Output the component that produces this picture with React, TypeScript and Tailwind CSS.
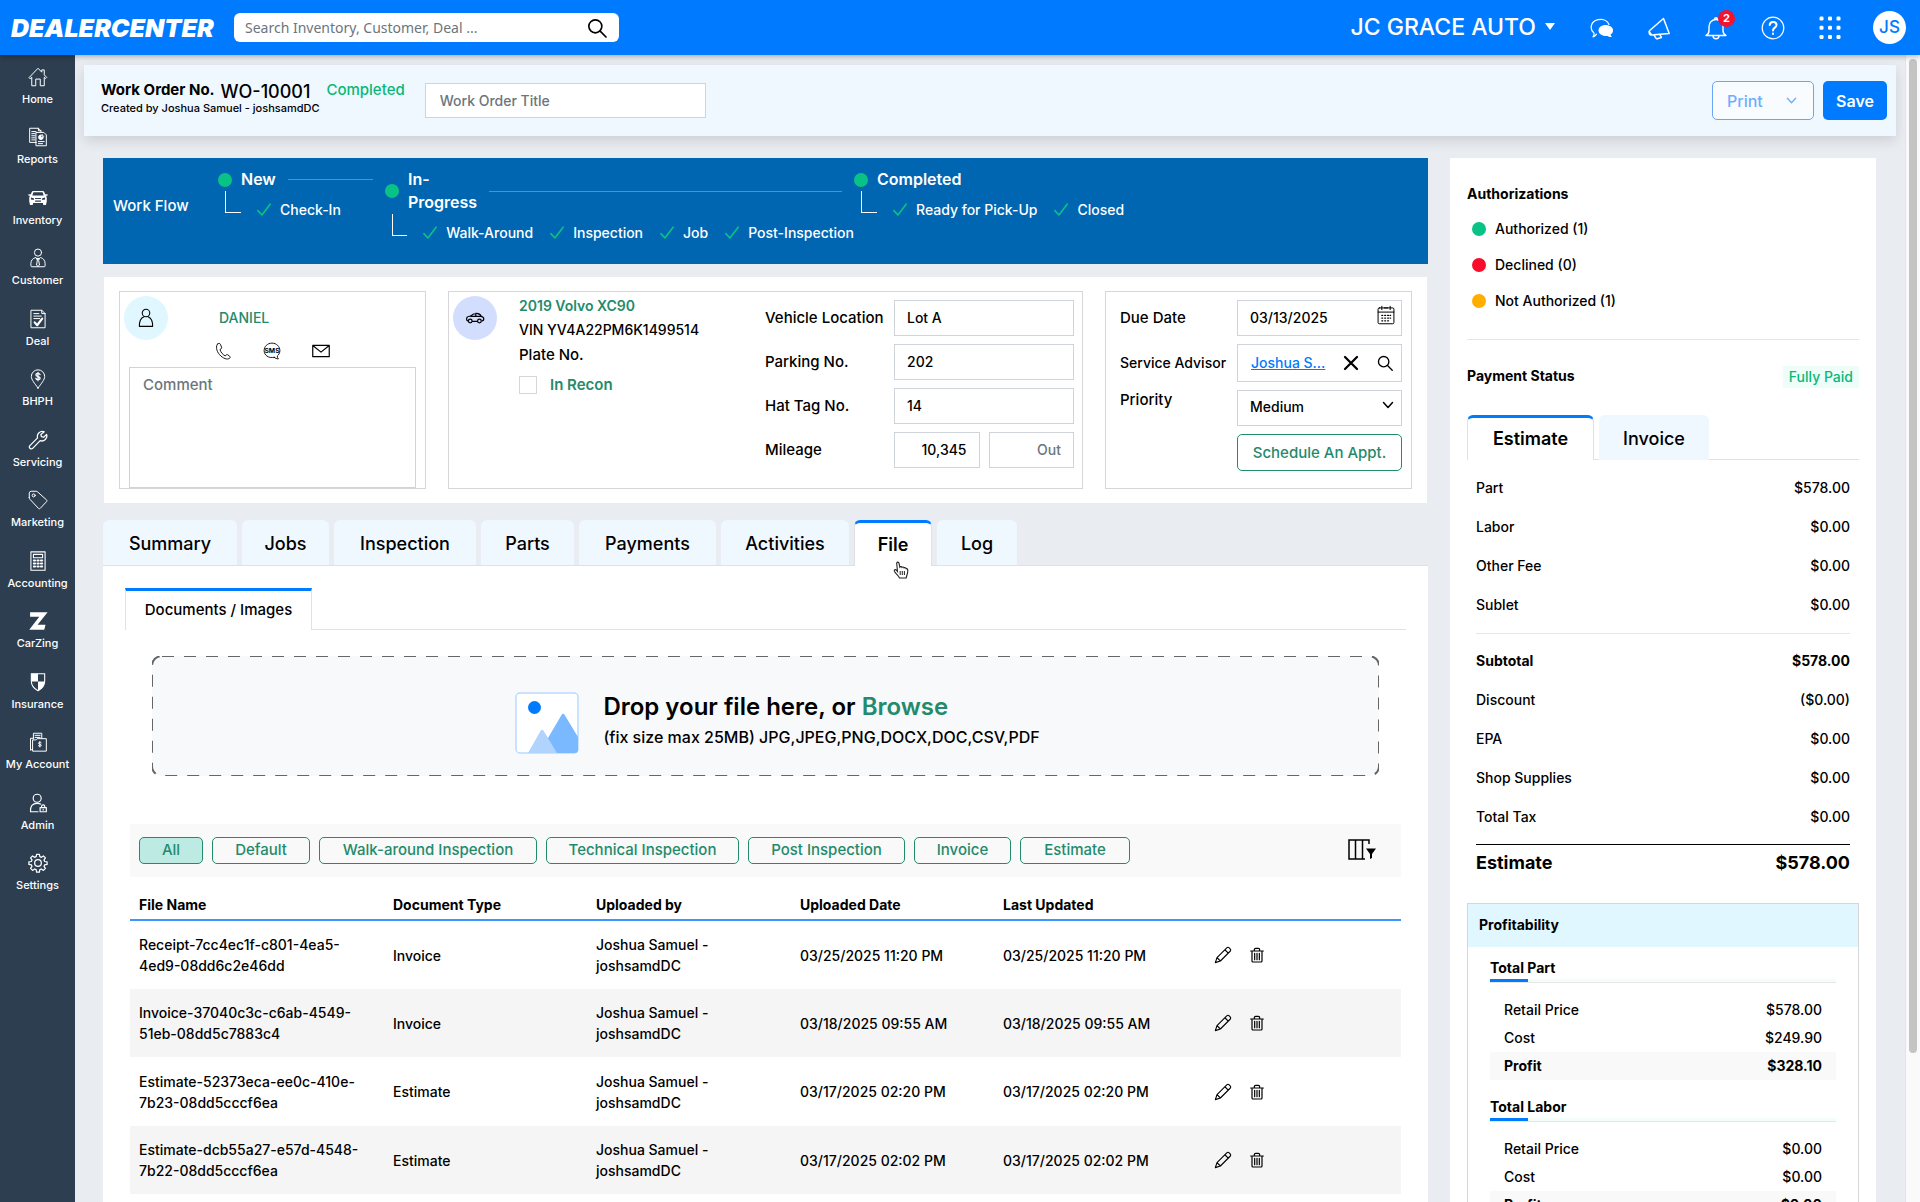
import React from 'react';

type IconProps = { className?: string };

const Svg: React.FC<{ className?: string; width?: number; children: React.ReactNode }> = ({
  className = 'size-5',
  width = 1.2,
  children,
}) => (
  <svg
    viewBox="0 0 24 24"
    fill="none"
    stroke="currentColor"
    strokeWidth={width}
    strokeLinecap="round"
    strokeLinejoin="round"
    className={className}
    aria-hidden="true"
  >
    {children}
  </svg>
);

const HomeIcon = () => (
  <Svg>
    <path d="M1.5 12.5 12 1.5l4.5 4.7V3.5h3v6l3 3-1.3 1.3-1.7-1.6V22.500h-4.800v-8h-5.400v8H4.500V12.200l-1.700 1.600z" />
  </Svg>
);

const ReportsIcon = () => (
  <Svg>
    <path d="M10 18.500H2V1.500h10.500L15.500 4.500V6M12.500 1.500v3h3M4.500 5.500h5M4.500 8h4M4.500 10.500h4M4.500 13h4M4.500 15.500h4" />
    <path d="M10 6.500h9l3 3v13H10zM12.500 17.500h7M12.500 20h5" />
    <path d="M15.500 9.500a2.800 2.800 0 1 0 2.800 2.800h-2.800z" fill="currentColor" />
    <path d="M17 9v2h2" />
  </Svg>
);

const InventoryIcon = () => (
  <svg viewBox="0 0 24 24" fill="currentColor" className="size-5" aria-hidden="true">
    <path
      fillRule="evenodd"
      d="M6.300 3.500h11.400c.9 0 1.500.4 1.800 1.200l1.100 2.800H23.500v1.800h-2.200c.9.8 1.200 1.700 1.200 2.900v4.600c0 .5-.2.8-.6 1v1.400c0 .8-.4 1.300-1.200 1.300h-1.400c-.8 0-1.300-.5-1.300-1.300V18H6v1.200c0 .8-.5 1.300-1.300 1.300H3.300c-.8 0-1.200-.5-1.200-1.300v-1.400c-.4-.2-.6-.5-.6-1v-4.600c0-1.200.3-2.100 1.200-2.900H.5V7.500h2.900l1.100-2.800c.3-.8.900-1.200 1.800-1.200zM6.500 5.200 5.200 9h13.600l-1.300-3.800zM3.500 11.500v2.300l3.500.5v-2zM20.500 11.500 17 12.300v2l3.500-.5zM8.500 12v1.300h7V12zM8.500 15v1.500h7V15z"
    />
  </svg>
);

const CustomerIcon = () => (
  <Svg>
    <circle cx="12" cy="5.500" r="4.300" />
    <path d="M9 11.500c-3.500.8-5.500 3.500-5.500 7v3c0 .6.4 1 1 1h15c.6 0 1-.4 1-1v-3c0-3.500-2-6.200-5.500-7L12 14zM10.500 12.500h3L12.800 15l1 5.500L12 22l-1.800-1.500 1-5.500z" />
  </Svg>
);

const DealIcon = () => (
  <Svg>
    <path d="M4 1.500h12.500l4 4v17H4zM16.500 1.500v4h4M7 5.500h6M7 8.500h9M7 11.500h7" />
    <path d="m8 16 3 3.500 6-8" strokeWidth="2.600" />
  </Svg>
);

const BhphIcon = () => (
  <Svg>
    <path d="M12 23C8 17 4 13 4 9a8 8 0 0 1 16 0c0 4-4 8-8 14z" />
    <path d="M14.500 6.800c-.4-1-1.300-1.500-2.500-1.500-1.500 0-2.500.8-2.500 1.900 0 2.600 5 1.200 5 3.700 0 1.200-1 1.900-2.500 1.900-1.300 0-2.300-.6-2.600-1.700M12 4v10" strokeWidth="1.500" />
  </Svg>
);

const WrenchIcon = () => (
  <Svg width={1.5}>
    <path d="M19.500 2.200a6 6 0 0 0-8 7.300L2 19a2.400 2.400 0 0 0 3.300 3.300l9.300-9.500a6 6 0 0 0 7.700-7.500l-3.500 3.400-2.700-.7-.7-2.700z" />
  </Svg>
);

const TagIcon = () => (
  <Svg>
    <path d="M1.500 9V3.500a2.500 2.500 0 0 1 2.500-2L9.500 1.500c.8 0 1.500.3 2 .8l10.700 9.500c.7.7.7 1.500 0 2.200l-7.500 8c-.7.7-1.500.7-2.200 0L2.200 11c-.5-.5-.7-1.200-.7-2z" />
    <circle cx="6.800" cy="6.500" r="1.800" />
  </Svg>
);

const CalculatorIcon = () => (
  <Svg width={1.3}>
    <path d="M3.500 1h17v22h-17zM6.500 4h11v4h-11z" />
    <path d="M7 11.500h1.500M11.300 11.500h1.500M15.500 11.500H17M7 15h1.500M11.300 15h1.500M15.500 15H17M7 18.500h1.500M11.300 18.500h1.500M15.500 18.500H17" strokeWidth="2.400" />
  </Svg>
);

const CarZingIcon = () => (
  <svg viewBox="0 0 24 24" fill="currentColor" className="size-5" aria-hidden="true">
    <path d="M2.500 1.500h21L11.500 16.500h9.500L19.500 22.500H1.500L13.500 7H2.500z" />
  </svg>
);

const ShieldIcon = () => (
  <svg viewBox="0 0 24 24" className="size-5" aria-hidden="true">
    <path d="M4 2h16v9c0 5-3.500 9-8 11.500C7.500 20 4 16 4 11z" fill="none" stroke="currentColor" strokeWidth="1.300" />
    <path d="M4 2h8v9.500H4zM12 11.500h8c-.3 5-3.500 8.500-8 11z" fill="currentColor" />
  </svg>
);

const AccountIcon = () => (
  <Svg>
    <path d="M6.500 8.500v-7h10v6M8.500 4h6M8.500 6.500h6M5.500 22.500v-13h4l1.500-1.500h11V22.500zM5.500 20.500 3 22V7.500h3.500" />
    <path d="M15.800 12.800c-1-.9-3.200-.6-3.200.7 0 1.500 3.300.8 3.300 2.400 0 1.400-2.400 1.600-3.400.6M14.200 11.500v6.500" />
  </Svg>
);

const AdminIcon = () => (
  <Svg width={1.4}>
    <circle cx="11" cy="6.300" r="4.800" />
    <path d="M12 22.500H3c-.6-7 2.500-10 8-10 1.800 0 3 .2 4.200.8M14.500 17.500h7.500v5h-7.500zM16.300 17.500v-1.500c0-2.300 3.800-2.300 3.800 0v1.500M18.200 19.500v1" />
  </Svg>
);

const GearIcon = () => (
  <Svg width={1.5}>
    <circle cx="12" cy="12" r="4" />
    <path d="M10.300 1.500h3.400l.5 2.900 1.900.8 2.400-1.700 2.400 2.400-1.700 2.400.8 1.900 2.900.5v3l-2.900.5-.8 1.900 1.700 2.400-2.400 2.400-2.400-1.700-1.900.8-.5 2.900h-3.400l-.5-2.900-1.900-.8-2.400 1.700-2.400-2.400 1.700-2.400-.8-1.900-2.900-.5v-3l2.900-.5.8-1.900-1.700-2.400 2.400-2.400 2.400 1.700 1.900-.8z" />
  </Svg>
);

const SearchIcon: React.FC<IconProps> = ({ className }) => (
  <Svg className={className} width={2}>
    <circle cx="10" cy="10" r="7.800" />
    <path d="m15.800 15.800 7 7" />
  </Svg>
);

const ChatIcon = () => (
  <Svg className="size-6">
    <path d="M6.500 18.200c-1 1.500-2 2.300-3.500 2.600 1-1.300 1.200-2.300 1-3.800C-.8 13 .5 5.500 8 3.700c5-1 9.500.8 11 4.800" />
    <path d="M15.500 9.500c4 0 7 2.100 7 4.900 0 1.700-1 3-2.600 3.900 0 1 .4 1.600 1.100 2.200-1.500 0-2.500-.4-3.400-1.200-5 .5-8.600-1.800-8.600-4.900 0-2.800 2.800-4.900 6.500-4.900z" fill="currentColor" />
  </Svg>
);

const MegaphoneIcon = () => (
  <Svg className="size-6" width={1.500}>
    <path d="M16.500 2.500 3 14.300c-1.600 1.500-1 4.200 1 4.700l18.200-1.500zM7 18.700l1.500 3c.5 1 1.500 1.300 2.500.8l3.500-1-1.700-3.200M2 15.500l2.500 3.300" />
  </Svg>
);

const BellIcon = () => (
  <Svg className="size-6" width={1.400}>
    <path d="M2 19.500c2.200-1 3-2.500 3-5V10.500a7 7 0 0 1 14 0v4c0 2.500.8 4 3 5zM10.700 3.500V3c0-1.800 2.600-1.800 2.600 0v.5M9 19.700c0 4 6 4 6 0" />
  </Svg>
);

const HelpIcon = () => (
  <Svg className="size-6">
    <circle cx="12" cy="12" r="10.800" />
    <path d="M8.700 9c.2-2 1.500-3 3.400-3 2 0 3.400 1.200 3.400 2.900 0 2.800-3.500 2.700-3.500 5.600M12 17.500v.4" strokeWidth="2" />
  </Svg>
);

const GridIcon = () => (
  <svg viewBox="0 0 24 24" fill="currentColor" className="size-6" aria-hidden="true">
    {[0.500, 9.800, 19].map((y) =>
      [1.500, 10, 18.500].map((x) => <rect key={`${x}-${y}`} x={x} y={y} width="4" height="4" rx="1.200" />),
    )}
  </svg>
);

const PersonIcon = () => (
  <Svg className="size-5" width={1.3}>
    <circle cx="12" cy="6" r="4.500" />
    <path d="M9.500 10.500C5.500 12 4 15 4 22h16c0-7-1.500-10-5.500-11.500" />
  </Svg>
);

const CarSideIcon = () => (
  <Svg className="size-5" width={1.500}>
    <path d="M3.500 15.500c-1.800-.3-2-3-.8-4.500.8-.9 2.800-1 4.300-1.500 2-2 4-3 7-3s4.500 1.500 5.500 3.500c2 .5 3 1.500 3 3 0 1.700-.8 2.500-2 2.500M9 16h5.500M7 10h12.500M13 6.500V10" />
    <circle cx="6.300" cy="15.500" r="2.200" />
    <circle cx="17.300" cy="15.500" r="2.200" />
  </Svg>
);

const PhoneIcon = () => (
  <Svg className="size-[18px]">
    <path d="M5 2.500C2 5 3 12 7.500 17s10.500 7.200 13.500 4.500c.8-.8.800-1.500 0-2.300l-2.500-2c-.8-.7-1.600-.6-2.300.1l-1 1.200C12.500 18 8.500 13 8 10l1.500-.9c.8-.5 1-1.200.6-2.100L8.500 3c-.6-1.300-2.300-1.500-3.500-.5z" />
  </Svg>
);

const SmsIcon = () => (
  <Svg className="size-[18px]">
    <path d="M15 20.500C7 22 1.500 17.500 1.500 11.500 1.500 6 6 1.500 12 1.500S22.500 6 22.500 11.500c0 3-1.300 5.500-3.500 7.200 0 1.500.5 2.700 1.500 3.800-2.200 0-4-.7-5.500-2z" />
    <text x="12" y="14.500" textAnchor="middle" fontSize="9" fontWeight="700" fontFamily="Inter" fill="currentColor" stroke="none">
      SMS
    </text>
  </Svg>
);

const MailIcon = () => (
  <Svg className="size-[18px]" width={1.600}>
    <path d="M1 4.500h22v15H1zM1.500 5 12 13.500 22.500 5" />
  </Svg>
);

const CalendarIcon = () => (
  <Svg className="size-5">
    <rect x="2.500" y="3.500" width="19" height="19" rx="1.500" />
    <path d="M2.500 8.500h19M7 1.500v4M17 1.500v4M10 3.500h4" />
    <path d="M7 12.500h1M10.500 12.500h1M14 12.500h1M17 12.500h.5M7 15.700h1M10.500 15.700h1M14 15.700h1M17 15.700h.5M7 19h1M10.500 19h1M14 19h1" strokeWidth="1.600" />
  </Svg>
);

const ChevronIcon: React.FC<IconProps> = ({ className }) => (
  <Svg className={className} width={3}>
    <path d="m3 7 9 10 9-10" />
  </Svg>
);

const CheckIcon = () => (
  <Svg className="size-[14px] shrink-0 text-[#09c285]" width={2.800}>
    <path d="m1.500 13 7 7.500L22.500 2" />
  </Svg>
);

const PencilIcon = () => (
  <Svg className="size-[18px]" width={1.500}>
    <path d="M1.800 22.200 4 15.500 17 2.500c1-1 2.300-1 3.300 0l1.200 1.200c1 1 1 2.300 0 3.300L8.500 20zM14.500 5l4.500 4.500M4 15.500 8.500 20" />
  </Svg>
);

const TrashIcon = () => (
  <Svg className="size-4" width={1.800}>
    <path d="M2.500 6h19M4.500 6v15c0 1 .6 1.500 1.500 1.500h12c.9 0 1.500-.5 1.500-1.500V6M8 5.500V4c0-1.500.8-2 2-2h4c1.200 0 2 .5 2 2v1.500M8.500 9.500v9.500M12 9.500v9.500M15.500 9.500v9.500" />
  </Svg>
);

const ColumnsFilterIcon = () => (
  <svg viewBox="0 0 28 22" fill="none" stroke="currentColor" strokeWidth="1.500" className="h-[22px] w-7" aria-hidden="true">
    <path d="M17 20H1V1h20v4M7.500 1v19M14.500 1v19" />
    <path d="M18 9.500h10l-4 5.500v4l-2 1v-5z" fill="currentColor" stroke="none" />
  </svg>
);

const ImageIcon = () => (
  <svg viewBox="0 0 64 62" className="h-[62px] w-16 shrink-0" aria-hidden="true">
    <rect x="1" y="1" width="62" height="60" rx="4" fill="#fff" stroke="#b9daff" strokeWidth="1.500" />
    <circle cx="19.500" cy="15.500" r="6.500" fill="#007bff" />
    <path d="M33 46 46.500 23c1-1.600 2.300-1.600 3.200 0L63 45v13c0 2-1 3-3 3H33z" fill="#7ab8ff" />
    <path d="M13 61 25.500 39c1-1.600 2.300-1.600 3.200 0L42 61z" fill="#b0d4fd" />
  </svg>
);

const HandCursor = () => (
  <svg viewBox="0 0 16 18" className="pointer-events-none absolute left-[38px] top-[38px] h-[18px] w-4" aria-hidden="true">
    <path
      d="M4.500 10.500 3.700 2.500c0-1.700 2-1.900 2.300-.3l.8 4c.6-.9 1.900-.7 2.200.2.700-.7 1.900-.5 2.100.4.800-.5 1.800-.1 2 .8 1.700-.2 1.900 1.400 1.600 3.400-.4 3-1.200 3.500-1.500 6H6.500c-.7-2-3.500-4-5-6.500-.9-1.700.9-2.500 1.900-1.300z"
      fill="#fff"
      stroke="#222"
      strokeWidth="1.100"
    />
    <path d="M7.200 10v4M9.300 10v4M11.400 10v4" stroke="#222" />
  </svg>
);

const navItems = [
  { label: 'Home', icon: HomeIcon },
  { label: 'Reports', icon: ReportsIcon },
  { label: 'Inventory', icon: InventoryIcon },
  { label: 'Customer', icon: CustomerIcon },
  { label: 'Deal', icon: DealIcon },
  { label: 'BHPH', icon: BhphIcon },
  { label: 'Servicing', icon: WrenchIcon },
  { label: 'Marketing', icon: TagIcon },
  { label: 'Accounting', icon: CalculatorIcon },
  { label: 'CarZing', icon: CarZingIcon },
  { label: 'Insurance', icon: ShieldIcon },
  { label: 'My Account', icon: AccountIcon },
  { label: 'Admin', icon: AdminIcon },
  { label: 'Settings', icon: GearIcon },
];

const stages = [
  { name: 'New', width: 'w-[167px]', labelWidth: 'w-[38px]', line: true, steps: ['Check-In'] },
  {
    name: 'In-Progress',
    width: 'w-[469px]',
    labelWidth: 'w-[72px]',
    line: true,
    steps: ['Walk-Around', 'Inspection', 'Job', 'Post-Inspection'],
  },
  { name: 'Completed', width: 'flex-1', labelWidth: '', line: false, steps: ['Ready for Pick-Up', 'Closed'] },
];

const tabs = [
  { label: 'Summary', width: 'w-[134px]' },
  { label: 'Jobs', width: 'w-[87px]' },
  { label: 'Inspection', width: 'w-[142px]' },
  { label: 'Parts', width: 'w-[93px]' },
  { label: 'Payments', width: 'w-[137px]' },
  { label: 'Activities', width: 'w-[128px]' },
  { label: 'File', width: 'w-[78px]' },
  { label: 'Log', width: 'w-[80px]' },
];

const filters = [
  { label: 'All', width: 'w-16' },
  { label: 'Default', width: 'w-[98px]' },
  { label: 'Walk-around Inspection', width: 'w-[218px]' },
  { label: 'Technical Inspection', width: 'w-[193px]' },
  { label: 'Post Inspection', width: 'w-[157px]' },
  { label: 'Invoice', width: 'w-[97px]' },
  { label: 'Estimate', width: 'w-[110px]' },
];

const files = [
  { name: ['Receipt-7cc4ec1f-c801-4ea5-', '4ed9-08dd6c2e46dd'], type: 'Invoice', date: '03/25/2025 11:20 PM' },
  { name: ['Invoice-37040c3c-c6ab-4549-', '51eb-08dd5c7883c4'], type: 'Invoice', date: '03/18/2025 09:55 AM' },
  { name: ['Estimate-52373eca-ee0c-410e-', '7b23-08dd5cccf6ea'], type: 'Estimate', date: '03/17/2025 02:20 PM' },
  { name: ['Estimate-dcb55a27-e57d-4548-', '7b22-08dd5cccf6ea'], type: 'Estimate', date: '03/17/2025 02:02 PM' },
];

const charges = [
  ['Part', '$578.00'],
  ['Labor', '$0.00'],
  ['Other Fee', '$0.00'],
  ['Sublet', '$0.00'],
];

const totals = [
  ['Discount', '($0.00)'],
  ['EPA', '$0.00'],
  ['Shop Supplies', '$0.00'],
  ['Total Tax', '$0.00'],
];

const authorizations = [
  { label: 'Authorized (1)', color: 'bg-[#09c285]' },
  { label: 'Declined (0)', color: 'bg-[#f80c2c]' },
  { label: 'Not Authorized (1)', color: 'bg-[#ffae00]' },
];

const profits = [
  { title: 'Total Part', retail: '$578.00', cost: '$249.90', profit: '$328.10' },
  { title: 'Total Labor', retail: '$0.00', cost: '$0.00', profit: '$0.00' },
];

const inputClass =
  'h-9 w-full min-w-0 border border-[#ced4da] bg-white px-3 pb-0.5 text-sm font-medium text-black placeholder:text-[#6c757d]';

const Header = () => (
  <header className="relative z-10 flex h-[55px] shrink-0 items-center bg-[#007bff] pr-[14px] text-white shadow-[0_2px_5px_rgba(0,0,0,0.25)]">
    <a href="#home" className="w-[234px] pl-[11px] font-['Inter',sans-serif] text-[25px] font-black italic leading-7">
      DEALERCENTER
    </a>
    <div className="flex h-[29px] w-[385px] items-center rounded-md bg-white pl-[11px] pr-3">
      <input
        aria-label="Search"
        placeholder="Search Inventory, Customer, Deal ..."
        className="min-w-0 flex-1 font-['Noto_Sans',sans-serif] text-sm text-black outline-none placeholder:text-[#6c757d]"
      />
      <button aria-label="Run search" className="text-black">
        <SearchIcon className="size-5" />
      </button>
    </div>
    <button className="ml-auto flex items-center gap-[9px] pb-0.5 text-[23px] font-medium leading-7">
      JC GRACE AUTO
      <svg viewBox="0 0 10 8" className="h-2 w-[10px]" fill="currentColor" aria-hidden="true">
        <path d="M0 0h10L5 7z" />
      </svg>
    </button>
    <div className="ml-[35px] flex items-center gap-[33px]">
      <button aria-label="Messages"><ChatIcon /></button>
      <button aria-label="Announcements"><MegaphoneIcon /></button>
      <button aria-label="Notifications" className="relative">
        <BellIcon />
        <span className="absolute -top-[6px] left-[14px] flex size-[17px] items-center justify-center rounded-full bg-[#f5122f] text-[11px] font-bold">
          2
        </span>
      </button>
      <button aria-label="Help"><HelpIcon /></button>
      <button aria-label="Apps"><GridIcon /></button>
      <button className="-ml-0.5 flex size-[33px] items-center justify-center rounded-full bg-white text-[17px] font-medium text-[#007bff]">
        JS
      </button>
    </div>
  </header>
);

const Sidebar = () => (
  <nav className="w-[75px] shrink-0 bg-[#2c3e50] pt-3 text-white">
    {navItems.map(({ label, icon: Icon }) => (
      <a key={label} href="#nav" className="flex flex-col items-center gap-1 text-[11px] font-medium leading-4 odd:h-[60px] even:h-[61px]">
        <Icon />
        {label}
      </a>
    ))}
  </nav>
);

const OrderBar = () => (
  <div className="mx-[9px] flex h-[71px] items-start bg-[#eff7ff] pl-[17px] pr-[9px] shadow-[0_5px_12px_rgba(0,0,0,0.12)]">
    <div className="pt-[13px] text-black">
      <div className="flex items-center">
        <span className="text-[15px] font-bold leading-6">Work Order No.</span>
        <span className="ml-1.5 mt-1 text-lg font-medium leading-5">WO-10001</span>
        <span className="ml-4 text-[15px] font-medium leading-6 text-[#09b878]">Completed</span>
      </div>
      <p className="text-[11px] font-medium leading-3">Created by Joshua Samuel - joshsamdDC</p>
    </div>
    <input
      aria-label="Work Order Title"
      placeholder="Work Order Title"
      className="ml-5 mt-[18px] h-[35px] w-[281px] border border-[#ced4da] bg-white px-[14px] text-sm font-medium placeholder:text-[#6c757d]"
    />
    <button className="ml-auto mt-4 flex h-[39px] w-[102px] items-center justify-between rounded-[5px] border border-[#6ba5f7] bg-[#f8fcff] px-[14px] text-base font-medium text-[#72acfb]">
      Print
      <ChevronIcon className="mr-0.5 size-[11px]" />
    </button>
    <button className="ml-[9px] mt-4 h-[39px] w-16 rounded-[5px] bg-[#007bff] text-base font-semibold text-white">Save</button>
  </div>
);

const WorkFlow = () => (
  <section className="flex h-[106px] bg-[#0066b2] text-white">
    <h2 className="w-[115px] pl-[10px] pt-[38px] text-[15px] font-medium leading-5">Work Flow</h2>
    {stages.map((stage) => (
      <div key={stage.name} className={`${stage.width} pt-[10px]`}>
        <div className="flex items-center pr-3">
          <span className="mr-[9px] size-[14px] shrink-0 rounded-full bg-[#09c285]" />
          <span className={`${stage.labelWidth} text-base font-semibold leading-[23px]`}>{stage.name}</span>
          {stage.line && <span className="ml-[9px] h-px flex-1 bg-[#09c285]" />}
        </div>
        <div className="flex pl-[7px]">
          <span className="h-[22px] w-4 border-b border-l border-white" />
          <ul className="ml-4 flex h-[38px] items-center gap-[17px]">
            {stage.steps.map((step) => (
              <li key={step} className="flex items-center gap-[9px] whitespace-nowrap text-sm font-medium leading-5">
                <CheckIcon />
                {step}
              </li>
            ))}
          </ul>
        </div>
      </div>
    ))}
  </section>
);

const DetailCards = () => (
  <section className="mx-px mt-[13px] grid grid-cols-[307px_1fr_307px] gap-[22px] bg-white px-[15px] py-[14px] text-[15px] font-medium leading-5 text-black">
    {/* Customer */}
    <div className="h-[198px] border border-[#d6d6d8] px-[9px] pt-1">
      <div className="flex">
        <span className="-ml-[5px] flex size-11 items-center justify-center rounded-full bg-[#e0f7ff]">
          <PersonIcon />
        </span>
        <div className="ml-[46px]">
          <a href="#customer" className="mt-3 block pl-[5px] text-sm text-[#238a6b]">DANIEL</a>
          <div className="mt-[14px] flex gap-[31px]">
            <button aria-label="Call"><PhoneIcon /></button>
            <button aria-label="Send SMS"><SmsIcon /></button>
            <button aria-label="Send email"><MailIcon /></button>
          </div>
        </div>
      </div>
      <textarea
        aria-label="Comment"
        placeholder="Comment"
        className="mt-[7px] block h-[121px] w-full resize-none border border-[#ced4da] px-[13px] py-[7px] placeholder:text-[#6c757d]"
      />
    </div>

    {/* Vehicle */}
    <div className="flex border border-[#d6d6d8] pl-1 pr-2">
      <span className="mt-1 flex size-11 shrink-0 items-center justify-center rounded-full bg-[#d3deff]">
        <CarSideIcon />
      </span>
      <div className="ml-[22px] flex-1 pt-1">
        <a href="#vehicle" className="block text-sm font-semibold text-[#238a6b]">2019 Volvo XC90</a>
        <p className="mt-1 text-sm">VIN YV4A22PM6K1499514</p>
        <p className="mt-[5px]">Plate No.</p>
        <label className="mt-[10px] flex items-center gap-[13px] font-semibold text-[#238a6b]">
          <input type="checkbox" className="size-[18px] appearance-none border border-[#d6d6d8]" />
          In Recon
        </label>
      </div>
      <div className="mt-2 grid grid-cols-[129px_180px] content-start items-center gap-y-2">
        <label htmlFor="location">Vehicle Location</label>
        <input id="location" defaultValue="Lot A" className={inputClass} />
        <label htmlFor="parking">Parking No.</label>
        <input id="parking" defaultValue="202" className={inputClass} />
        <label htmlFor="hat-tag">Hat Tag No.</label>
        <input id="hat-tag" defaultValue="14" className={inputClass} />
        <label htmlFor="mileage">Mileage</label>
        <div className="flex gap-[9px]">
          <input id="mileage" defaultValue="10,345" className={`${inputClass} text-right`} />
          <input aria-label="Mileage out" placeholder="Out" className={`${inputClass} text-right`} />
        </div>
      </div>
    </div>

    {/* Schedule */}
    <div className="border border-[#d6d6d8] pl-[14px] pr-[9px] pt-2">
      <div className="grid grid-cols-[117px_1fr] items-center gap-y-2">
        <label htmlFor="due-date">Due Date</label>
        <div className="relative">
          <input id="due-date" defaultValue="03/13/2025" className={inputClass} />
          <button aria-label="Pick a date" className="absolute right-1.5 top-[5px]"><CalendarIcon /></button>
        </div>
        <span className="whitespace-nowrap text-sm">Service Advisor</span>
        <div className="flex h-[38px] items-center border border-[#ced4da] pl-[13px] pr-2">
          <a href="#advisor" className="flex-1 text-sm text-[#007bff] underline">Joshua S...</a>
          <button aria-label="Clear advisor">
            <Svg className="size-4" width={3.400}>
              <path d="m3 3 18 18M21 3 3 21" />
            </Svg>
          </button>
          <button aria-label="Find advisor" className="ml-[18px]"><SearchIcon className="size-4" /></button>
        </div>
        <label htmlFor="priority" className="-mt-4">Priority</label>
        <div className="relative">
          <select id="priority" className={`${inputClass} appearance-none`}>
            <option>Medium</option>
          </select>
          <ChevronIcon className="pointer-events-none absolute right-2 top-[9px] size-3" />
        </div>
        <button className="col-start-2 h-[37px] whitespace-nowrap rounded-[5px] border border-[#238a6b] text-[#238a6b]">
          Schedule An Appt.
        </button>
      </div>
    </div>
  </section>
);

const FilePanel = () => (
  <section className="flex-1 bg-white px-[22px] pt-[22px] text-black">
    <div className="flex border-b border-[#dee2e6]" role="tablist">
      <button
        role="tab"
        aria-selected="true"
        className="-mb-px h-[42px] w-[187px] border-x border-t-[3px] border-x-[#dee2e6] border-t-[#007bff] bg-white text-[15px] font-medium"
      >
        Documents / Images
      </button>
    </div>

    <div className="relative mx-[27px] mt-[26px] flex h-[120px] items-center justify-center gap-6 rounded-[10px] bg-[#f8f9fb] pl-6 pt-[14px]">
      <svg className="absolute inset-0 size-full" aria-hidden="true">
        <rect width="100%" height="100%" rx="10" fill="none" stroke="#666" strokeWidth="2" strokeDasharray="12 10" />
      </svg>
      <ImageIcon />
      <div className="mb-1">
        <p className="text-2xl font-semibold leading-8">
          Drop your file here, or{' '}
          <label className="text-[#238a6b]">
            Browse
            <input type="file" className="sr-only" />
          </label>
        </p>
        <p className="text-base font-medium leading-7">(fix size max 25MB) JPG,JPEG,PNG,DOCX,DOC,CSV,PDF</p>
      </div>
    </div>

    <div className="mx-[5px] mt-12 flex h-[53px] items-center bg-[#f9f9f9] pl-[9px] pr-[25px]">
      <div className="flex gap-[9px]">
        {filters.map(({ label, width }) => (
          <button
            key={label}
            className={`${width} ${label === 'All' ? 'bg-[#bdebe3]' : ''} h-[27px] rounded-[5px] border border-[#238a6b] pb-0.5 text-[15px] font-medium leading-5 text-[#238a6b]`}
          >
            {label}
          </button>
        ))}
      </div>
      <button aria-label="Choose columns" className="ml-auto pb-0.5"><ColumnsFilterIcon /></button>
    </div>

    <div className="mx-[5px]">
      <table className="w-full table-fixed text-left text-sm font-medium leading-[21px]">
        <colgroup>
          <col className="w-[254px]" />
          <col className="w-[203px]" />
          <col className="w-[204px]" />
          <col className="w-[203px]" />
          <col className="w-[204px]" />
          <col />
        </colgroup>
        <thead className="border-b-2 border-[#3d96ff] font-bold">
          <tr className="h-[43px]">
            {['File Name', 'Document Type', 'Uploaded by', 'Uploaded Date', 'Last Updated'].map((title) => (
              <th key={title} className="pl-[9px] pt-3">{title}</th>
            ))}
            <th aria-label="Actions" />
          </tr>
        </thead>
        <tbody>
          {files.map((file) => (
            <tr key={file.name[0]} className="odd:h-[69px] even:h-[68px] even:bg-[#f5f5f5]">
              <td className="whitespace-nowrap pl-[9px]">{file.name[0]}<br />{file.name[1]}</td>
              <td className="pl-[9px]">{file.type}</td>
              <td className="pl-[9px]">Joshua Samuel -<br />joshsamdDC</td>
              <td className="pl-[9px]">{file.date}</td>
              <td className="pl-[9px]">{file.date}</td>
              <td className="pl-4">
                <div className="flex items-center gap-[17px]">
                  <button aria-label="Edit"><PencilIcon /></button>
                  <button aria-label="Delete"><TrashIcon /></button>
                </div>
              </td>
            </tr>
          ))}
        </tbody>
      </table>
    </div>
  </section>
);

const Tabs = () => (
  <div className="mt-[17px] flex gap-[5px] border-b border-[#dee2e6]" role="tablist">
    {tabs.map(({ label, width }) => {
      const active = label === 'File';
      return (
        <button
          key={label}
          role="tab"
          aria-selected={active}
          className={`${width} relative -mb-px h-[46px] rounded-t-md text-lg text-black ${
            active
              ? 'border-x border-t-[3px] border-x-[#dee2e6] border-t-[#007bff] bg-white font-semibold'
              : 'border-b border-[#dee2e6] bg-[#eff7ff] pt-0.5 font-medium'
          }`}
        >
          {label}
          {active && <HandCursor />}
        </button>
      );
    })}
  </div>
);

const Row: React.FC<{ row: string[]; className: string }> = ({ row, className }) => (
  <div className={`flex items-center justify-between ${className}`}>
    <span>{row[0]}</span>
    <span>{row[1]}</span>
  </div>
);

const SummaryPanel = () => (
  <aside className="w-[426px] shrink-0 bg-white px-[17px] pt-[26px] text-sm font-medium leading-5 text-black">
    <h2 className="font-bold">Authorizations</h2>
    <ul className="mt-[7px] border-b border-[#e6e6e6] pb-5 pl-[5px]">
      {authorizations.map(({ label, color }) => (
        <li key={label} className="flex h-9 items-center gap-[9px]">
          <span className={`size-[14px] rounded-full ${color}`} />
          {label}
        </li>
      ))}
    </ul>
    <div className="mt-[26px] flex items-start justify-between">
      <h2 className="font-bold">Payment Status</h2>
      <span className="bg-[#effdf8] px-1.5 py-px text-[#09b878]">Fully Paid</span>
    </div>
    <div className="mt-[27px] flex gap-[5px] border-b border-[#dee2e6] text-lg" role="tablist">
      <button
        role="tab"
        aria-selected="true"
        className="-mb-px h-[45px] w-[127px] rounded-t-md border-x border-t-[3px] border-x-[#dee2e6] border-t-[#007bff] bg-white font-semibold"
      >
        Estimate
      </button>
      <button role="tab" aria-selected="false" className="-mb-px h-[45px] w-[110px] rounded-t-md bg-[#eff7ff] pt-0.5">
        Invoice
      </button>
    </div>
    <div className="mx-[9px] pt-2">
      {charges.map((row) => (
        <Row key={row[0]} row={row} className="h-[39px]" />
      ))}
      <div className="mt-[9px] border-t border-[#e6e6e6] pt-[7px]">
        <Row row={['Subtotal', '$578.00']} className="h-[39px] font-bold" />
        {totals.map((row) => (
          <Row key={row[0]} row={row} className="h-[39px]" />
        ))}
      </div>
      <Row row={['Estimate', '$578.00']} className="mt-2 h-[36px] border-t border-black text-lg font-bold" />
    </div>

    <section className="mt-[23px] border border-[#d6d6d8]">
      <h2 className="h-[43px] bg-[#e0f7ff] pl-[11px] text-sm font-bold leading-[42px]">Profitability</h2>
      <div className="px-[22px] pt-[10px]">
        {profits.map((group) => (
          <div key={group.title} className="mb-4">
            <h3 className="font-bold leading-[22px]">{group.title}</h3>
            <div className="h-1 border-b border-[#e6e6e6] bg-[#f3fdf9]">
              <div className="h-[3px] w-[38px] bg-[#007bff]" />
            </div>
            <div className="pt-[13px]">
              <Row row={['Retail Price', group.retail]} className="h-7 px-[14px]" />
              <Row row={['Cost', group.cost]} className="h-7 px-[14px]" />
              <Row row={['Profit', group.profit]} className="h-7 bg-[#f9f9f9] px-[14px] font-bold" />
            </div>
          </div>
        ))}
      </div>
    </section>
  </aside>
);

export default function App() {
  return (
    <div className="flex h-screen flex-col overflow-hidden bg-[#e9ecf1] font-['Inter',sans-serif]">
      <Header />
      <div className="flex min-h-0 flex-1">
        <Sidebar />
        <main className="flex min-w-0 flex-1 flex-col overflow-hidden pt-[10px]">
          <OrderBar />
          <div className="flex min-h-0 flex-1 gap-[22px] pl-7 pr-[29px] pt-[22px]">
            <div className="flex min-w-0 flex-1 flex-col">
              <WorkFlow />
              <DetailCards />
              <Tabs />
              <FilePanel />
            </div>
            <SummaryPanel />
          </div>
        </main>
        {/* Scroll track */}
        <div className="w-[15px] border-l border-[#e4e4e4] bg-[#fafafa] px-[3px] pt-1">
          <div className="h-[87%] rounded-full bg-[#c4c4c4]" />
        </div>
      </div>
    </div>
  );
}
